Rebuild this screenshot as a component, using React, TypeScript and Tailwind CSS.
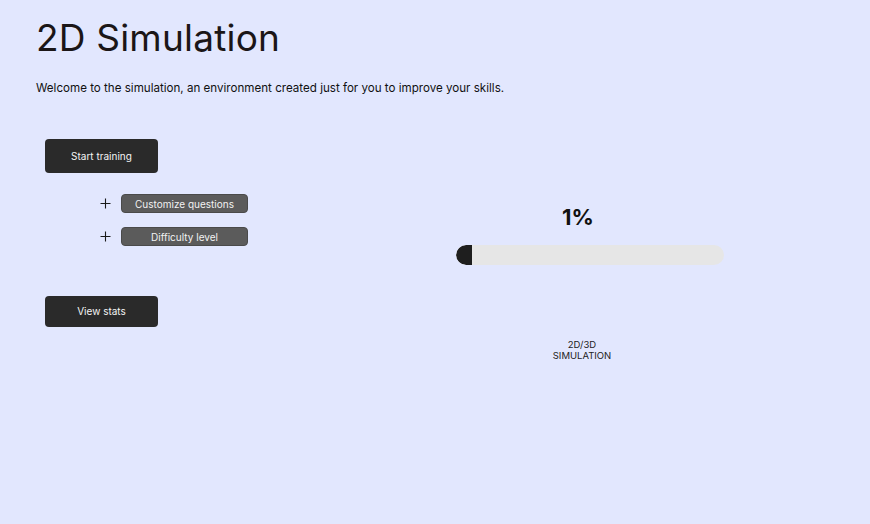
import React from 'react';

const font = { fontFamily: 'Inter, "Noto Sans", sans-serif' };

const ProgressBar = ({ value }: { value: number }) => (
  <div className="w-[268px] h-[20px] rounded-full bg-[#e6e6e6] overflow-hidden flex">
    <div className="h-full bg-[#1e1e1e] rounded-l-full" style={{ width: `${Math.max(value * 1.6, 16)}px` }} />
  </div>
);

const PlusIcon = () => (
  <svg width="11" height="11" viewBox="0 0 11 11" className="text-[#1a1a1a]">
    <path d="M5.5 0.5v10M0.5 5.5h10" stroke="currentColor" strokeWidth="1.1" fill="none" />
  </svg>
);

const OptionRow = ({ label }: { label: string }) => (
  <div className="flex items-center">
    <div className="w-[21px] flex justify-start">
      <PlusIcon />
    </div>
    <button className="w-[127px] h-[19px] rounded-[4px] bg-[#5b5b5b] border border-[#4a4a4a] text-[10px] text-[#f2f2f2] leading-none">
      {label}
    </button>
  </div>
);

export default function App() {
  return (
    <div className="w-full min-h-screen bg-[#e2e7fe] text-[#1b1617]" style={font}>
      <div className="pl-[36px] pt-[14px]">
        <h1 className="text-[37px] leading-[48px] font-normal tracking-[0.2px]">2D Simulation</h1>
        <p className="mt-[18px] text-[11.6px] leading-[16px] text-[#111]">
          Welcome to the simulation, an environment created just for you to improve your skills.
        </p>
      </div>

      <div className="flex mt-[43px]">
        <div className="pl-[45px] w-[300px] flex flex-col">
          <button className="w-[113px] h-[34px] rounded-[4px] bg-[#2a2a2a] text-[#f4f4f4] text-[10px]">
            Start training
          </button>
          <div className="pl-[55px] mt-[21px] flex flex-col gap-[14px]">
            <OptionRow label="Customize questions" />
            <OptionRow label="Difficulty level" />
          </div>
          <button className="mt-[50px] w-[113px] h-[31px] rounded-[4px] bg-[#2a2a2a] text-[#f4f4f4] text-[10px]">
            View stats
          </button>
        </div>

        <div className="ml-[156px] flex flex-col">
          <div className="mt-[64px] w-[244px] text-center text-[22px] font-bold leading-[28px] text-[#111]">1%</div>
          <div className="mt-[14px]">
            <ProgressBar value={1} />
          </div>
          <div className="mt-[74px] w-[252px] text-center text-[9.5px] leading-[11px] text-[#222] uppercase">
            2D/3D
            <br />
            Simulation
          </div>
        </div>
      </div>
    </div>
  );
}
